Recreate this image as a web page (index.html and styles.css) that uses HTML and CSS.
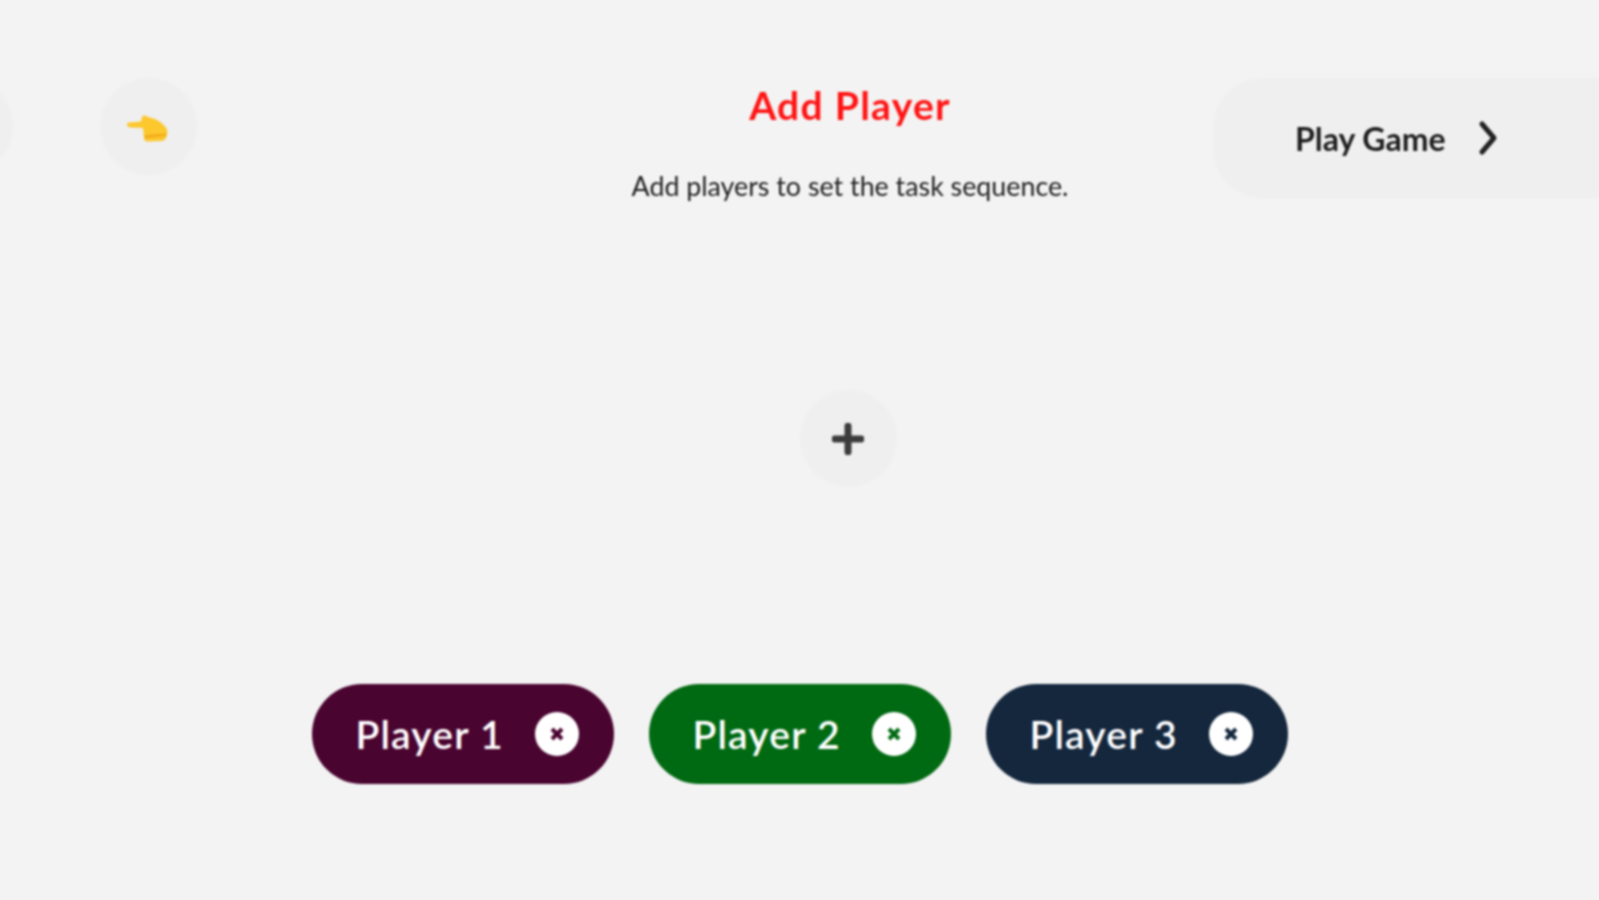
FILE: index.html
```html
<!DOCTYPE html>
<html lang="en">
<head>
<meta charset="utf-8">
<title>Add Player</title>
<link rel="stylesheet" href="styles.css">
</head>
<body>
<div class="page">
  <header class="top">
    <div class="round-group">
      <div class="round"></div>
      <button class="round">
        <svg class="hand" viewBox="0 0 42 28" width="42" height="28"><path fill="#fcc82e" d="M1 10.500C1 9 2.500 8.500 4 8.500L15 7.500 16 3C17 1 19 1 21 2.500L27 4.500C31 5.500 35 8 38 11.500 41 14 42 17 41 21 40 25 38 27 35 27L22 27.500C19 27.500 18 26 18 24L17 14 5 13.500C3 13.500 1 12.500 1 10.500Z"/><path fill="#f3ad1c" d="M19 21L40 19.500 40.500 22 19 24.500Z"/></svg>
      </button>
    </div>
    <div class="heading">
      <h1 class="title">Add Player</h1>
      <p class="sub">Add players to set the task sequence.</p>
    </div>
    <button class="play">
      <span>Play Game</span>
      <svg class="chev" viewBox="0 0 20 36" width="20" height="36"><path d="M4 4L16 18 4 32" fill="none" stroke="#222" stroke-width="5" stroke-linecap="round" stroke-linejoin="round"/></svg>
    </button>
  </header>
  <div class="add-row">
    <button class="round">
      <svg viewBox="0 0 32 32" width="32" height="32"><path d="M16 3V29M3 16H29" stroke="#3c3c3c" stroke-width="7" stroke-linecap="round"/></svg>
    </button>
  </div>
  <div class="players">
    <div class="pill p1"><span>Player 1</span><span class="x"><svg viewBox="0 0 14 14" width="14" height="14"><path d="M2 2L12 12M12 2L2 12" stroke="#4a0430" stroke-width="4"/></svg></span></div>
    <div class="pill p2"><span>Player 2</span><span class="x"><svg viewBox="0 0 14 14" width="14" height="14"><path d="M2 2L12 12M12 2L2 12" stroke="#006a12" stroke-width="4"/></svg></span></div>
    <div class="pill p3"><span>Player 3</span><span class="x"><svg viewBox="0 0 14 14" width="14" height="14"><path d="M2 2L12 12M12 2L2 12" stroke="#14273d" stroke-width="4"/></svg></span></div>
  </div>
</div>
</body>
</html>
```
FILE: styles.css
```css
* { box-sizing: border-box; }
html, body { margin: 0; height: 100%; overflow: hidden; background: #f3f3f3; }
body { font-family: "Lato", "Open Sans", sans-serif; }
.page { height: 900px; display: flex; flex-direction: column; padding-top: 78px; filter: blur(0.8px); }
.top { display: flex; align-items: flex-start; height: 120px; margin-right: -60px; }
.round-group { display: flex; gap: 87px; margin-left: -84px; }
.round { width: 97px; height: 97px; border-radius: 50%; background: #efefef; border: 0; padding: 0; display: flex; align-items: center; justify-content: center; flex: none; }
.hand { margin: 3px 4px 0 0; }
.heading { flex: 1; padding-left: 290px; text-align: center; }
.title { margin: 7px 0 0; font-size: 39px; line-height: 40px; font-weight: 700; letter-spacing: 1.300px; color: #ff1414; }
.sub { margin: 45px 0 0; font-size: 26.800px; line-height: 32px; font-weight: 400; color: #1e1e1e; }
.play { width: 446px; height: 120px; border: 0; border-radius: 50px 0 0 50px; background: #efefef; display: flex; align-items: center; gap: 32px; padding: 0 0 0 82px; font: 700 32px "Lato", sans-serif; color: #1e1e1e; flex: none; }
.add-row { display: flex; justify-content: center; padding-left: 97px; margin-top: 192px; }
.players { display: flex; justify-content: center; gap: 35px; margin-top: 197px; }
.pill { width: 302px; height: 100px; border-radius: 50px; display: flex; align-items: center; justify-content: space-between; padding: 0 35px 0 44px; color: #fff; font-size: 39px; font-weight: 600; letter-spacing: 1.200px; }
.p1 { background: #4a0430; }
.p2 { background: #006a12; }
.p3 { background: #14273d; }
.x { width: 44px; height: 44px; border-radius: 50%; background: #fff; display: flex; align-items: center; justify-content: center; }
```
